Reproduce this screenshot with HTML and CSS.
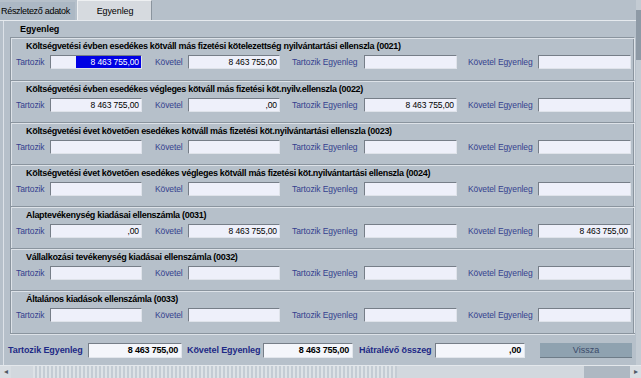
FILE: index.html
```html
<!DOCTYPE html>
<html lang="hu">
<head>
    <meta charset="UTF-8">
    <title>Egyenleg</title>
    <link rel="stylesheet" href="styles.css">
</head>
<body>
    <div class="window">
        <div class="main">
            <div class="content">
                <div class="tabs">
                    <div class="tab">Részletező adatok</div>
                    <div class="tab active">Egyenleg</div>
                </div>

                <div class="frame">
                    <div class="group-title">Egyenleg</div>
                    <div class="sections">
                        <div class="section">
                            <div class="section-title">Költségvetési évben esedékes kötváll más fizetési kötelezettség nyilvántartási ellenszla (0021)</div>
                            <div class="row">
                                <span class="lbl l1">Tartozik</span><span class="field w92"><span class="sel">8 463 755,00</span></span>
                                <span class="lbl l2">Követel</span><span class="field w92">8 463 755,00</span>
                                <span class="lbl l3">Tartozik Egyenleg</span><span class="field w93"></span>
                                <span class="lbl l4">Követel Egyenleg</span><span class="field w93"></span>
                            </div>
                        </div>
                        <div class="section">
                            <div class="section-title">Költségvetési évben esedékes végleges kötváll más fizetési köt.nyilv.ellenszla (0022)</div>
                            <div class="row">
                                <span class="lbl l1">Tartozik</span><span class="field w92">8 463 755,00</span>
                                <span class="lbl l2">Követel</span><span class="field w92">,00</span>
                                <span class="lbl l3">Tartozik Egyenleg</span><span class="field w93">8 463 755,00</span>
                                <span class="lbl l4">Követel Egyenleg</span><span class="field w93"></span>
                            </div>
                        </div>
                        <div class="section">
                            <div class="section-title">Költségvetési évet követően esedékes kötváll más fizetési köt.nyilvántartási ellenszla (0023)</div>
                            <div class="row">
                                <span class="lbl l1">Tartozik</span><span class="field w92"></span>
                                <span class="lbl l2">Követel</span><span class="field w92"></span>
                                <span class="lbl l3">Tartozik Egyenleg</span><span class="field w93"></span>
                                <span class="lbl l4">Követel Egyenleg</span><span class="field w93"></span>
                            </div>
                        </div>
                        <div class="section">
                            <div class="section-title">Költségvetési évet követően esedékes végleges kötváll más fizetési köt.nyilvántartási ellenszla (0024)</div>
                            <div class="row">
                                <span class="lbl l1">Tartozik</span><span class="field w92"></span>
                                <span class="lbl l2">Követel</span><span class="field w92"></span>
                                <span class="lbl l3">Tartozik Egyenleg</span><span class="field w93"></span>
                                <span class="lbl l4">Követel Egyenleg</span><span class="field w93"></span>
                            </div>
                        </div>
                        <div class="section">
                            <div class="section-title">Alaptevékenység kiadásai ellenszámla (0031)</div>
                            <div class="row">
                                <span class="lbl l1">Tartozik</span><span class="field w92">,00</span>
                                <span class="lbl l2">Követel</span><span class="field w92">8 463 755,00</span>
                                <span class="lbl l3">Tartozik Egyenleg</span><span class="field w93"></span>
                                <span class="lbl l4">Követel Egyenleg</span><span class="field w93">8 463 755,00</span>
                            </div>
                        </div>
                        <div class="section">
                            <div class="section-title">Vállalkozási tevékenység kiadásai ellenszámla (0032)</div>
                            <div class="row">
                                <span class="lbl l1">Tartozik</span><span class="field w92"></span>
                                <span class="lbl l2">Követel</span><span class="field w92"></span>
                                <span class="lbl l3">Tartozik Egyenleg</span><span class="field w93"></span>
                                <span class="lbl l4">Követel Egyenleg</span><span class="field w93"></span>
                            </div>
                        </div>
                        <div class="section">
                            <div class="section-title">Általános kiadások ellenszámla (0033)</div>
                            <div class="row">
                                <span class="lbl l1">Tartozik</span><span class="field w92"></span>
                                <span class="lbl l2">Követel</span><span class="field w92"></span>
                                <span class="lbl l3">Tartozik Egyenleg</span><span class="field w93"></span>
                                <span class="lbl l4">Követel Egyenleg</span><span class="field w93"></span>
                            </div>
                        </div>
                    </div>

                    <div class="footer">
                        <span class="sum-lbl s1">Tartozik Egyenleg</span><span class="sum-field f94">8 463 755,00</span>
                        <span class="sum-lbl s2">Követel Egyenleg</span><span class="sum-field f90">8 463 755,00</span>
                        <span class="sum-lbl s3">Hátralévő összeg</span><span class="sum-field f90">,00</span>
                        <button class="back">Vissza</button>
                    </div>
                </div>
            </div>
            <div class="vscroll"><div class="vthumb"></div></div>
        </div>

        <div class="hscroll">
            <div class="arrow">&#9666;</div>
            <div class="track">
                <div class="thumb"></div>
                <div class="rest"></div>
            </div>
            <div class="arrow">&#9656;</div>
        </div>
    </div>
</body>
</html>
```

FILE: styles.css
```css
body {
    margin: 0;
    background-color: #b6c0ca;
    font-family: "Liberation Sans", Arial, sans-serif;
    color: black;
}

.window {
    width: 641px;
    height: 378px;
    display: flex;
    flex-direction: column;
    overflow: hidden;
}

.main {
    display: flex;
    height: 365px;
}

.content {
    flex: 1;
    display: flex;
    flex-direction: column;
}

/* Tabs */
.tabs {
    display: flex;
    align-items: flex-end;
    height: 21px;
    border-bottom: 1px solid #e6eaee;
}

.tab {
    width: 75px;
    height: 18px;
    line-height: 18px;
    font-size: 9px;
    letter-spacing: -0.3px;
    background-color: #acb8c4;
    padding-left: 1px;
    box-sizing: border-box;
    white-space: nowrap;
}

.tab.active {
    margin-left: 2px;
    width: 75px;
    height: 20px;
    line-height: 20px;
    text-align: center;
    letter-spacing: -0.1px;
    background-color: #d6dadf;
    border-top: 1px solid #eef0f2;
    border-left: 1px solid #eef0f2;
    border-right: 1px solid #8a949e;
}

/* Frame with sections */
.frame {
    flex: 1;
    margin-left: 3px;
    border-left: 1px solid #dde2e8;
    display: flex;
    flex-direction: column;
}

.group-title {
    height: 16px;
    line-height: 16px;
    padding-left: 16px;
    font-size: 9px;
    font-weight: bold;
    letter-spacing: -0.1px;
}

.sections {
    margin-left: 6px;
    margin-right: 1px;
    border-bottom: 1px solid #8a949e;
    box-shadow: 0 1px 0 #dde2e8;
}

.section {
    height: 42px;
    box-sizing: border-box;
    border-top: 1px solid #8a949e;
    border-left: 1px solid #8a949e;
    border-right: 1px solid #dde2e8;
    box-shadow: inset 1px 1px 0 #dde2e8, inset -1px 0 0 #8a949e;
    padding-top: 2px;
}

.section:nth-child(1),
.section:nth-child(7) {
    height: 43px;
}

.section-title {
    height: 12px;
    line-height: 12px;
    padding-left: 15px;
    font-size: 9px;
    font-weight: bold;
    letter-spacing: -0.3px;
    white-space: nowrap;
}

.row {
    display: flex;
    align-items: center;
    margin-top: 3px;
    padding-left: 5px;
    height: 14px;
}

.lbl {
    font-size: 8.5px;
    letter-spacing: -0.1px;
    color: #343f8e;
    white-space: nowrap;
}

.l1 { width: 34px; }
.l2 { width: 33px; margin-left: 13px; }
.l3 { width: 72px; margin-left: 12px; }
.l4 { width: 70px; margin-left: 11px; }

.field {
    height: 14px;
    box-sizing: border-box;
    background-color: #eef0fa;
    border-top: 1px solid #767e88;
    border-left: 1px solid #767e88;
    border-bottom: 1px solid #dfe3ea;
    border-right: 1px solid #dfe3ea;
    font-size: 8.5px;
    letter-spacing: -0.1px;
    line-height: 12px;
    text-align: right;
    padding-right: 2px;
    white-space: nowrap;
}

.w92 { width: 92px; }
.w93 { width: 93px; }

.sel {
    display: inline-block;
    background-color: #0000e4;
    color: white;
    width: 65px;
    margin-right: -2px;
    padding-right: 2px;
    box-sizing: border-box;
}

/* Footer totals */
.footer {
    display: flex;
    align-items: center;
    height: 31px;
    padding-top: 1px;
    box-sizing: border-box;
    margin-left: -4px;
    padding-left: 8px;
}

.sum-lbl {
    font-size: 9px;
    font-weight: bold;
    letter-spacing: -0.1px;
    color: #1e2a86;
    white-space: nowrap;
}

.s1 { width: 80px; }
.s2 { width: 76px; margin-left: 5px; }
.s3 { width: 76px; margin-left: 6px; }

.sum-field {
    height: 15px;
    box-sizing: border-box;
    background-color: #f4f6fb;
    border-top: 1px solid #767e88;
    border-left: 1px solid #767e88;
    border-bottom: 1px solid #e2e6ec;
    border-right: 1px solid #e2e6ec;
    font-size: 9px;
    font-weight: bold;
    letter-spacing: -0.2px;
    line-height: 13px;
    text-align: right;
    padding-right: 3px;
}

.f94 { width: 94px; }
.f90 { width: 90px; }

.back {
    margin-left: 15px;
    width: 92px;
    height: 15px;
    padding: 0;
    border: none;
    border-bottom: 1px solid #6e7c88;
    background-color: #8fa2b0;
    color: #3a4a6a;
    font-family: "Liberation Sans", Arial, sans-serif;
    font-size: 9px;
}

/* Scrollbars */
.vscroll {
    width: 5px;
    background-color: #c3cbd3;
}

.vthumb {
    margin-top: 10px;
    height: 50px;
    background-color: #8e9aa6;
}

.hscroll {
    display: flex;
    height: 13px;
    background-color: #c9d0d7;
    border-top: 1px solid #e4e8ec;
    box-sizing: border-box;
}

.arrow {
    width: 11px;
    font-size: 8px;
    line-height: 12px;
    text-align: center;
    color: #505a66;
    background-color: #d8dde2;
}

.track {
    flex: 1;
    display: flex;
    background-color: #d2d8de;
}

.thumb {
    margin-left: 22px;
    width: 364px;
    background-image: repeating-linear-gradient(90deg, #dde2e6 0 2px, #c4ccd4 2px 4px);
}

.rest {
    margin-left: auto;
    width: 46px;
    background-color: #aeb8c2;
}
```
